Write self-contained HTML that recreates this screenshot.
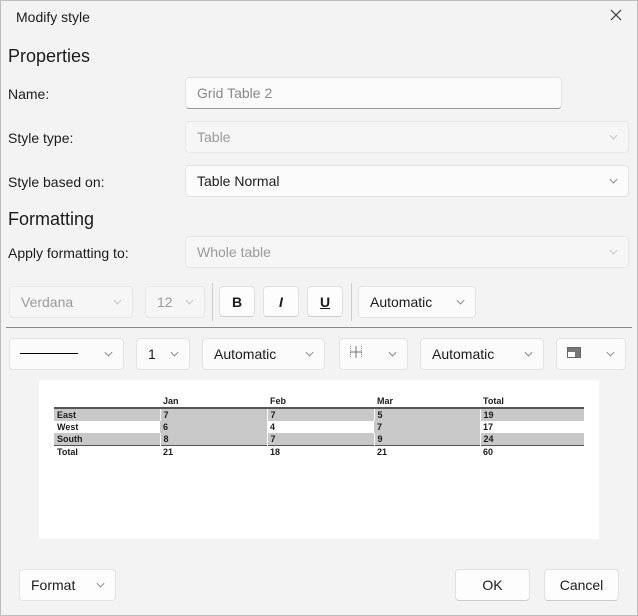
<!DOCTYPE html>
<html><head><style>
*{box-sizing:border-box;margin:0;padding:0}
body{width:638px;height:616px;background:#f3f3f3;font-family:"Liberation Sans",sans-serif;font-size:14px;color:#1b1b1b;position:relative;overflow:hidden}
.frame{position:absolute;left:0;top:0;width:638px;height:616px;border:1px solid #bdbdbd}
.a{position:absolute}
.lbl{position:absolute;left:8px;font-size:14px}
.box{position:absolute;background:#fbfbfb;border:1px solid #e3e3e3;border-radius:4px;height:32px;line-height:30px;padding-left:11px;font-size:14px}
.dis{background:#f6f6f6;color:#9a9a9a;border-color:#e8e8e8}
.chev{position:absolute;right:11px;top:10px;width:7px;height:7px;border-right:1px solid #777;border-bottom:1px solid #777;transform:rotate(45deg) scale(.8)}
.dis .chev{border-color:#bbb}
.btn{position:absolute;background:#fdfdfd;border:1px solid #e0e0e0;border-bottom-color:#ccc;border-radius:4px;text-align:center;font-size:14px}
table{border-collapse:collapse;font-size:9px;font-weight:bold;font-family:"Liberation Sans",sans-serif;table-layout:fixed}
td{height:12px;padding:0 0 0 3px;line-height:12px;overflow:hidden}
.g{background:#c8c8c8}
</style></head><body>
<div class="frame"></div>
<div class="a" style="left:16px;top:9px;font-size:14px">Modify style</div>
<svg class="a" style="left:610px;top:9px" width="12" height="12"><path d="M1 1L11 11M11 1L1 11" stroke="#333" stroke-width="1.2"/></svg>
<div class="a" style="left:8px;top:46px;font-size:18px">Properties</div>
<div class="lbl" style="top:86px">Name:</div>
<div class="box" style="left:185px;top:77px;width:377px;color:#888;border-bottom-color:#999">Grid Table 2</div>
<div class="lbl" style="top:130px">Style type:</div>
<div class="box dis" style="left:185px;top:121px;width:444px">Table<div class="chev"></div></div>
<div class="lbl" style="top:174px">Style based on:</div>
<div class="box" style="left:185px;top:165px;width:444px">Table Normal<div class="chev"></div></div>
<div class="a" style="left:8px;top:209px;font-size:18px">Formatting</div>
<div class="lbl" style="top:245px">Apply formatting to:</div>
<div class="box dis" style="left:185px;top:236px;width:444px">Whole table<div class="chev"></div></div>

<div class="box dis" style="left:9px;top:286px;width:124px">Verdana<div class="chev"></div></div>
<div class="box dis" style="left:145px;top:286px;width:60px">12<div class="chev"></div></div>
<div class="a" style="left:212px;top:283px;width:1px;height:38px;background:#ccc"></div>
<div class="btn" style="left:219px;top:286px;width:36px;height:31px;line-height:30px;font-weight:bold">B</div>
<div class="btn" style="left:263px;top:286px;width:36px;height:31px;line-height:30px;font-style:italic;font-weight:bold">I</div>
<div class="btn" style="left:307px;top:286px;width:36px;height:31px;line-height:30px;text-decoration:underline;font-weight:bold">U</div>
<div class="a" style="left:351px;top:283px;width:1px;height:38px;background:#ccc"></div>
<div class="box" style="left:358px;top:286px;width:118px">Automatic<div class="chev"></div></div>
<div class="a" style="left:6px;top:327px;width:626px;height:1px;background:#8a8a8a"></div>

<div class="box" style="left:9px;top:338px;width:115px"><div class="a" style="left:10px;top:14px;width:58px;height:1px;background:#000"></div><div class="chev"></div></div>
<div class="box" style="left:136px;top:338px;width:54px">1<div class="chev"></div></div>
<div class="box" style="left:202px;top:338px;width:123px">Automatic<div class="chev"></div></div>
<div class="box" style="left:339px;top:338px;width:69px"><svg class="a" style="left:10px;top:7px" width="12" height="12"><path d="M.5 0V12M11.5 0V12M0 6H12M6 0V12" stroke="#888" stroke-dasharray="1 1" fill="none"/><path d="M0 6H12M6 0V12" stroke="#777" fill="none"/></svg><div class="chev"></div></div>
<div class="box" style="left:420px;top:338px;width:124px">Automatic<div class="chev"></div></div>
<div class="box" style="left:556px;top:338px;width:70px"><svg class="a" style="left:10px;top:8px" width="14" height="11"><rect x=".5" y=".5" width="13" height="10" fill="#fff" stroke="#666"/><rect x="1" y="1" width="12" height="4" fill="#777"/><rect x="8" y="5" width="5" height="5" fill="#777"/></svg><div class="chev"></div></div>

<div class="a" style="left:39px;top:380px;width:560px;height:159px;background:#fff"></div>
<table class="a" style="left:54px;top:395px;width:530px">
<colgroup><col style="width:106px"><col style="width:107px"><col style="width:107px"><col style="width:106px"><col style="width:104px"></colgroup>
<tr style="border-bottom:2px solid #555"><td></td><td>Jan</td><td>Feb</td><td>Mar</td><td>Total</td></tr>
<tr class="g"><td>East</td><td style="border-left:1px solid #fff">7</td><td style="border-left:1px solid #fff">7</td><td style="border-left:1px solid #fff">5</td><td style="border-left:1px solid #fff">19</td></tr>
<tr><td>West</td><td class="g">6</td><td>4</td><td class="g">7</td><td>17</td></tr>
<tr class="g" style="border-bottom:1px solid #555"><td>South</td><td style="border-left:1px solid #fff">8</td><td style="border-left:1px solid #fff">7</td><td style="border-left:1px solid #fff">9</td><td style="border-left:1px solid #fff">24</td></tr>
<tr><td>Total</td><td>21</td><td>18</td><td>21</td><td>60</td></tr>
</table>

<div class="box" style="left:19px;top:569px;width:97px;background:#fdfdfd">Format<div class="chev"></div></div>
<div class="btn" style="left:455px;top:569px;width:75px;height:32px;line-height:30px">OK</div>
<div class="btn" style="left:544px;top:569px;width:75px;height:32px;line-height:30px">Cancel</div>
</body></html>
